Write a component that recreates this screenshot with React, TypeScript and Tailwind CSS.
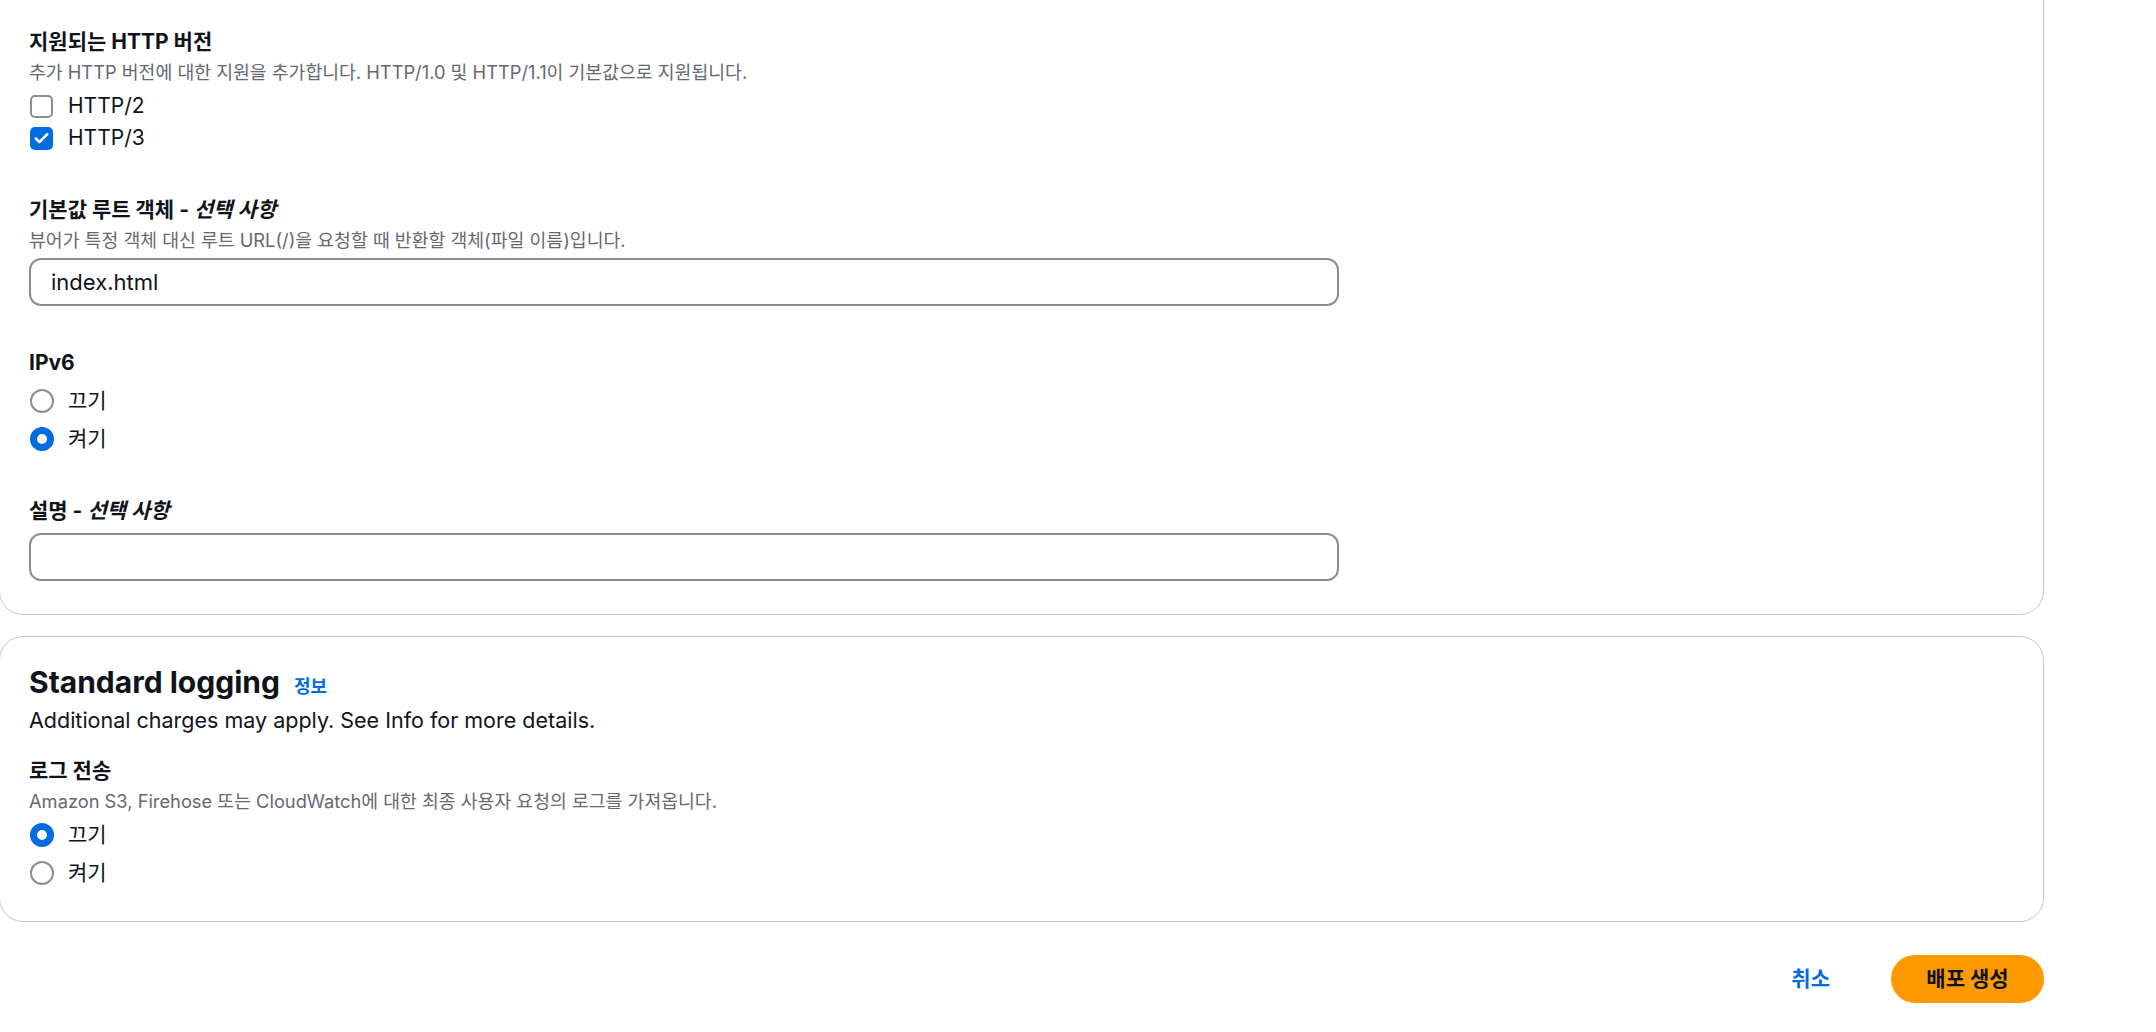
import { Check } from "lucide-react";

function Label({ children }: { children: React.ReactNode }) {
  return <div className="text-[21px] font-bold leading-[30px] text-[#0f141a]">{children}</div>;
}

function Desc({ children }: { children: React.ReactNode }) {
  return <div className="text-[18.3px] leading-[30px] text-[#656871]">{children}</div>;
}

function Checkbox({ label, checked }: { label: string; checked?: boolean }) {
  return (
    <label className="flex h-[32px] items-center gap-[15px]">
      <span
        className={
          checked
            ? "ml-[1px] flex h-[23px] w-[23px] items-center justify-center rounded-[5px] bg-[#006ce0]"
            : "ml-[1px] h-[23px] w-[23px] rounded-[5px] border-2 border-[#8c8c94] bg-white"
        }
      >
        {checked && <Check className="h-[17px] w-[17px] text-white" strokeWidth={3.5} />}
      </span>
      <span className="text-[21px] text-[#0f141a]">{label}</span>
    </label>
  );
}

function Radio({ label, checked }: { label: string; checked?: boolean }) {
  return (
    <label className="flex h-[38px] items-center gap-[14px]">
      <span
        className={
          checked
            ? "ml-[1px] h-[24px] w-[24px] rounded-full border-[7px] border-[#006ce0] bg-white"
            : "ml-[1px] h-[24px] w-[24px] rounded-full border-2 border-[#8c8c94] bg-white"
        }
      />
      <span className="text-[21px] text-[#0f141a]">{label}</span>
    </label>
  );
}

function TextInput({ value }: { value?: string }) {
  return (
    <div className="flex h-[48px] w-[1310px] items-center rounded-[12px] border-2 border-[#8c8c94] bg-white px-[20px] text-[22px] text-[#0f141a]">
      {value}
    </div>
  );
}

export default function App() {
  return (
    <div className="min-h-screen overflow-hidden bg-white font-['Inter','Noto_Sans_CJK_KR',sans-serif]">
      <div className="-ml-[1px] flex w-[2045px] flex-col">
        <div className="-mt-[30px] rounded-[24px] border border-[#c6c6cd] bg-white pb-[33px] pl-[29px] pt-[56px]">
          <Label>지원되는 HTTP 버전</Label>
          <Desc>추가 HTTP 버전에 대한 지원을 추가합니다. HTTP/1.0 및 HTTP/1.1이 기본값으로 지원됩니다.</Desc>
          <div className="mt-[3px]">
            <Checkbox label="HTTP/2" />
            <Checkbox label="HTTP/3" checked />
          </div>

          <div className="mt-[41px]">
            <Label>
              기본값 루트 객체 - <i>선택 사항</i>
            </Label>
            <Desc>뷰어가 특정 객체 대신 루트 URL(/)을 요청할 때 반환할 객체(파일 이름)입니다.</Desc>
            <div className="mt-[3px]">
              <TextInput value="index.html" />
            </div>
          </div>

          <div className="mt-[42px]">
            <Label>IPv6</Label>
            <div className="mt-[4px]">
              <Radio label="끄기" />
              <Radio label="켜기" checked />
            </div>
          </div>

          <div className="mt-[38px]">
            <Label>
              설명 - <i>선택 사항</i>
            </Label>
            <div className="mt-[7px]">
              <TextInput />
            </div>
          </div>
        </div>

        <div className="mt-[21px] rounded-[24px] border border-[#c6c6cd] bg-white pb-[29px] pl-[29px] pt-[27px]">
          <div className="flex items-baseline gap-[14px]">
            <h2 className="text-[30px] font-bold leading-[36px] text-[#0f141a]">Standard logging</h2>
            <a className="text-[18px] font-bold text-[#006ce0]">정보</a>
          </div>
          <div className="mt-[5px] text-[21.5px] leading-[30px] text-[#0f141a]">
            Additional charges may apply. See Info for more details.
          </div>

          <div className="mt-[21px]">
            <Label>로그 전송</Label>
            <Desc>Amazon S3, Firehose 또는 CloudWatch에 대한 최종 사용자 요청의 로그를 가져옵니다.</Desc>
            <div>
              <Radio label="끄기" checked />
              <Radio label="켜기" />
            </div>
          </div>
        </div>

        <div className="mt-[33px] flex items-center justify-end gap-[61px]">
          <button className="text-[21px] font-bold text-[#006ce0]">취소</button>
          <button className="flex h-[48px] w-[153px] items-center justify-center rounded-full bg-[#ff9900] text-[21px] font-bold text-[#0f141a]">
            배포 생성
          </button>
        </div>
      </div>
    </div>
  );
}
